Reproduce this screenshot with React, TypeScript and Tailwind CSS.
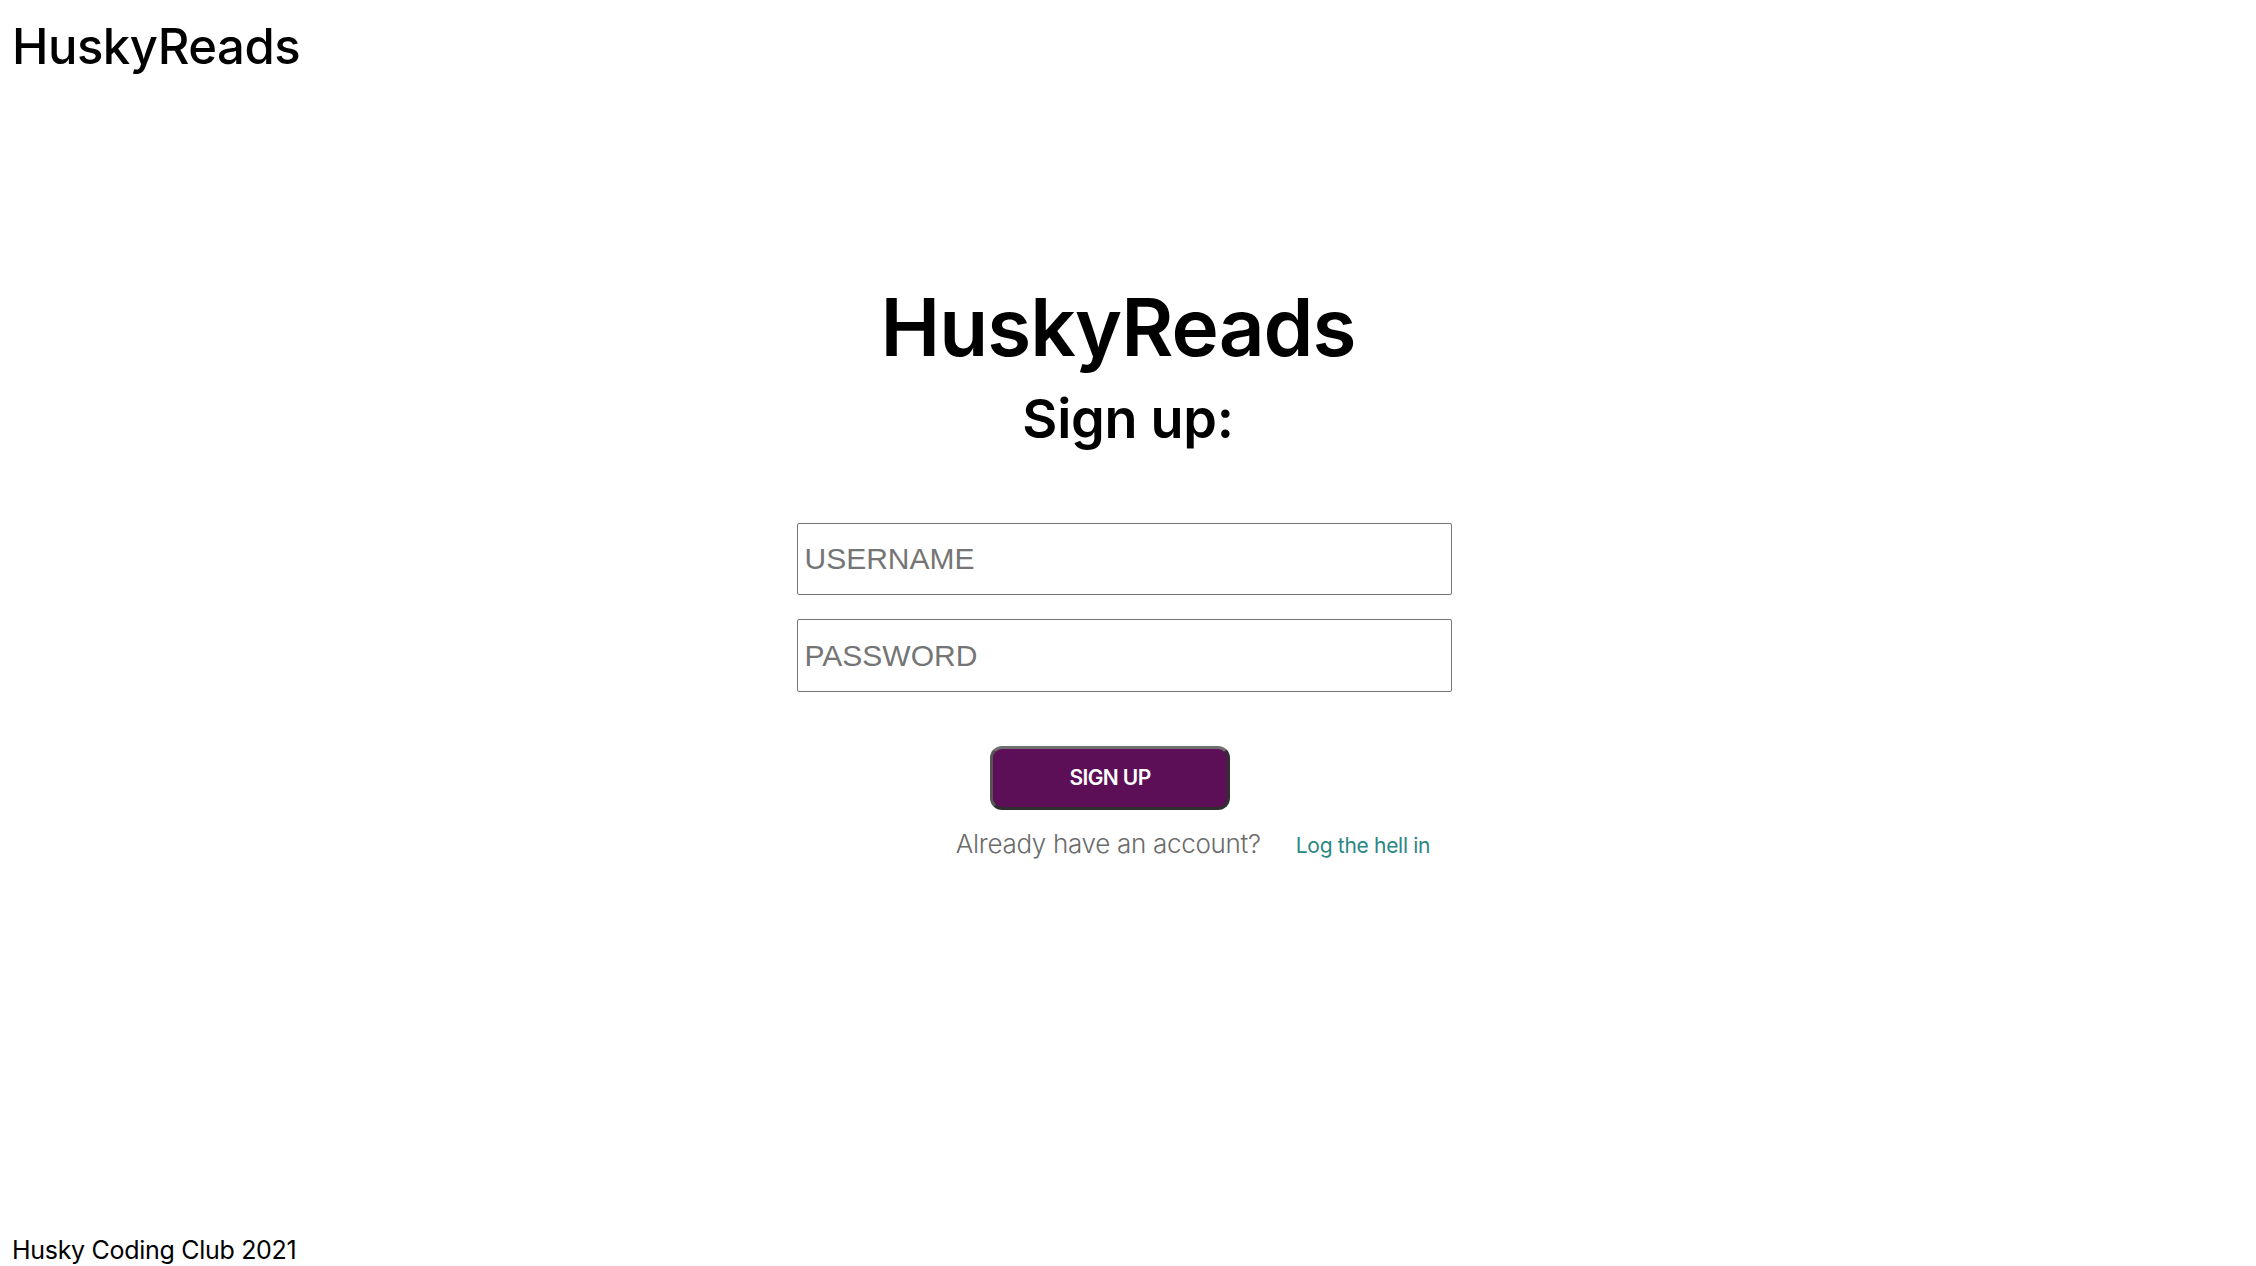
import React from "react";

export default function App() {
  return (
    <div className="min-h-screen flex flex-col bg-white text-black font-['Inter',sans-serif]">
      <header className="pl-[12px] pt-[22px]">
        <div className="text-[49px] leading-none font-medium tracking-[-0.5px]">HuskyReads</div>
      </header>
      <main className="flex-1 flex flex-col items-center">
        <h1 className="mt-[216px] mr-[20px] text-[80px] leading-none font-semibold tracking-[-1px]">HuskyReads</h1>
        <h2 className="mt-[25px] text-[54px] leading-none font-semibold tracking-[-0.3px]">Sign up:</h2>
        <input
          type="text"
          placeholder="USERNAME"
          className="mt-[77px] mr-[8px] w-[655px] h-[72px] border border-[#767676] rounded-[2px] px-[7px] text-[30px] font-['Liberation_Sans',Arial,sans-serif] placeholder:text-[#757575] outline-none"
        />
        <input
          type="password"
          placeholder="PASSWORD"
          className="mt-[24px] mr-[8px] w-[655px] h-[73px] border border-[#767676] rounded-[2px] px-[7px] text-[30px] font-['Liberation_Sans',Arial,sans-serif] placeholder:text-[#757575] outline-none"
        />
        <button className="mt-[54px] mr-[36px] w-[240px] h-[64px] rounded-[12px] bg-[#5c0f57] border-[3px] border-[#2f2f2f] border-t-[#6f6f6f] border-l-[#555555] text-white text-[21px] font-semibold tracking-[-0.6px]">
          SIGN UP
        </button>
        <div className="mt-[21px] ml-[130px] flex items-baseline gap-[35px]">
          <span className="text-[26px] leading-none font-light text-[#6b6b6b] tracking-[-0.3px]">Already have an account?</span>
          <a href="#" className="text-[21px] leading-none text-[#2a8783] tracking-[-0.3px]">Log the hell in</a>
        </div>
      </main>
      <footer className="pl-[12px] pb-[3px]">
        <div className="text-[25px] leading-none font-normal tracking-[-0.3px]">Husky Coding Club 2021</div>
      </footer>
    </div>
  );
}
